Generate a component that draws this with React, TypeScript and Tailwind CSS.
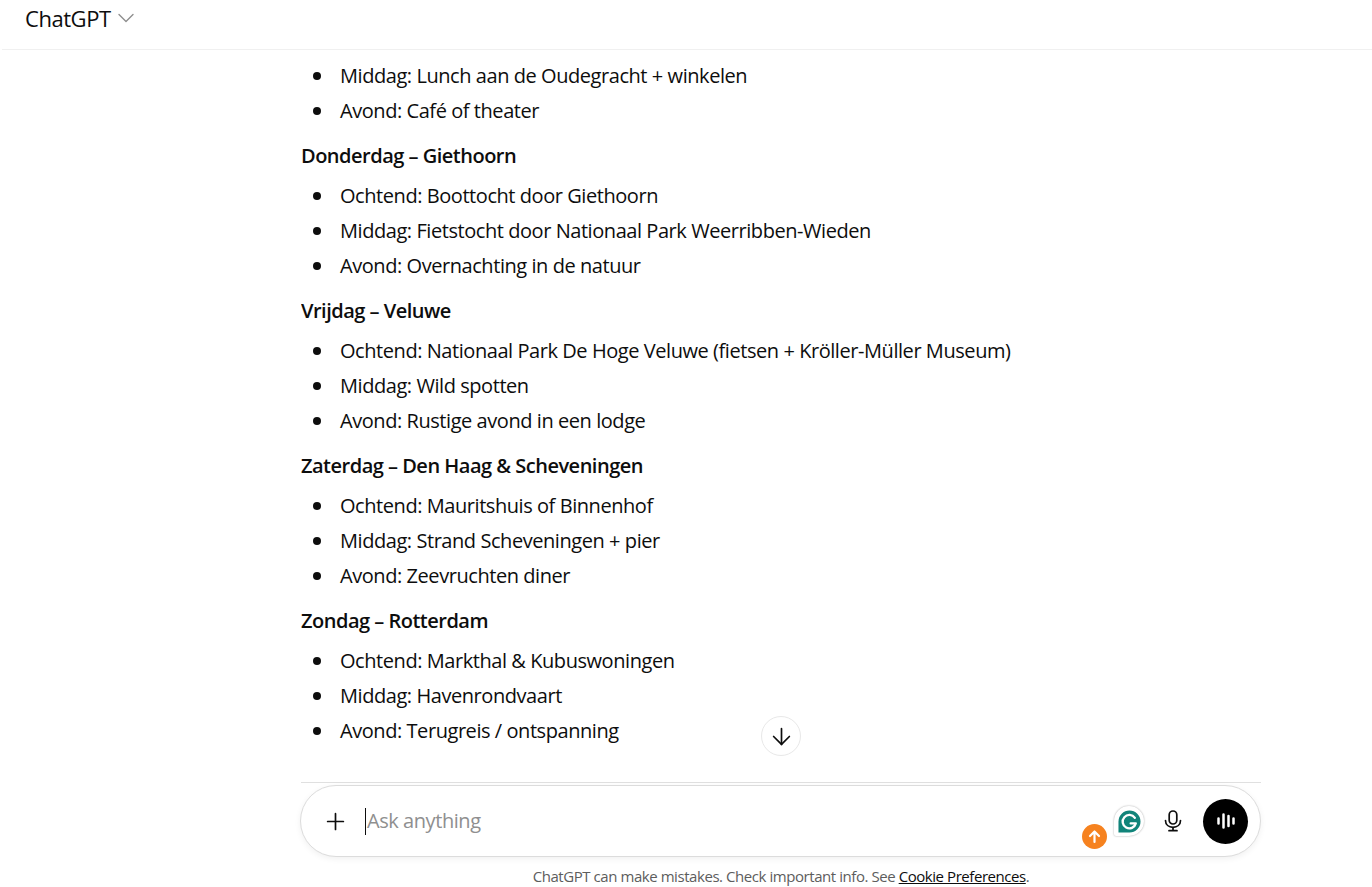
import { ArrowDown, ChevronDown, Plus } from "lucide-react";

const sections = [
  {
    items: ["Middag: Lunch aan de Oudegracht + winkelen", "Avond: Café of theater"],
  },
  {
    title: "Donderdag – Giethoorn",
    items: [
      "Ochtend: Boottocht door Giethoorn",
      "Middag: Fietstocht door Nationaal Park Weerribben-Wieden",
      "Avond: Overnachting in de natuur",
    ],
  },
  {
    title: "Vrijdag – Veluwe",
    items: [
      "Ochtend: Nationaal Park De Hoge Veluwe (fietsen + Kröller-Müller Museum)",
      "Middag: Wild spotten",
      "Avond: Rustige avond in een lodge",
    ],
  },
  {
    title: "Zaterdag – Den Haag & Scheveningen",
    items: [
      "Ochtend: Mauritshuis of Binnenhof",
      "Middag: Strand Scheveningen + pier",
      "Avond: Zeevruchten diner",
    ],
  },
  {
    title: "Zondag – Rotterdam",
    items: ["Ochtend: Markthal & Kubuswoningen", "Middag: Havenrondvaart", "Avond: Terugreis / ontspanning"],
  },
];

function MicIcon() {
  return (
    <svg width="20" height="24" viewBox="0 0 20 24" fill="none" stroke="#0d0d0d" strokeWidth="1.7" strokeLinecap="round">
      <rect x="6.2" y="2" width="7.6" height="13" rx="3.8" />
      <path d="M2.5 11.5c0 4.2 3.3 6.8 7.5 6.8s7.5-2.6 7.5-6.8" />
      <path d="M10 18.5V21.5M6 21.7h8" />
    </svg>
  );
}

function VoiceIcon() {
  return (
    <svg width="20" height="20" viewBox="0 0 20 20" fill="none" stroke="#fff" strokeWidth="2.5" strokeLinecap="round">
      <path d="M2.5 7.5v5M7.5 3.5v13M12.5 5v10M17.5 7.5v5" />
    </svg>
  );
}

function GrammarlyBadge() {
  return (
    <div className="absolute left-[813px] top-[20px] flex h-[30px] w-[30px] items-center justify-center rounded-[15px] rounded-bl-[2px] bg-white shadow-[0_0_2px_rgba(0,0,0,0.35)]">
      <svg width="23" height="23" viewBox="0 0 24 24">
        <path d="M12 .5a11.5 11.5 0 1 1 0 23H.5V12A11.5 11.5 0 0 1 12 .5z" fill="#11847a" />
        <path
          d="M17.6 8.2A7 7 0 1 0 18.6 14h-5.4"
          fill="none"
          stroke="#fff"
          strokeWidth="2.4"
          strokeLinecap="round"
          strokeLinejoin="round"
        />
      </svg>
    </div>
  );
}

function OrangeBadge() {
  return (
    <div className="absolute left-[781px] top-[38px] flex h-[25px] w-[25px] items-center justify-center rounded-full bg-[#f6821f]">
      <svg width="15" height="15" viewBox="0 0 15 15" fill="none" stroke="#fff" strokeWidth="2.2" strokeLinecap="round" strokeLinejoin="round">
        <path d="M7.5 13V2.5M3 7l4.5-4.5L12 7" />
      </svg>
    </div>
  );
}

export default function App() {
  return (
    <div className="flex h-[887px] w-[1372px] flex-col overflow-hidden bg-white font-['Open_Sans','Noto_Sans',sans-serif] text-[20px] leading-[35px] tracking-[-0.44px] text-[#0d0d0d]">
      <header className="ml-[2px] flex h-[50px] shrink-0 items-start border-b border-[#f0f0f0] pl-[23px] pt-[1px]">
        <span className="text-[22px] leading-[34px] tracking-[-0.45px]">ChatGPT</span>
        <ChevronDown className="ml-[1px] mt-[3px] h-[28px] w-[28px] text-[#8f8f8f]" strokeWidth={1.2} />
      </header>

      <main className="relative ml-[301px] h-[732px] w-[960px] shrink-0 overflow-hidden pt-[8px]">
        {sections.map((section, index) => (
          <section key={index}>
            {section.title && <h3 className="mb-[5px] mt-[10px] font-semibold tracking-[-0.5px]">{section.title}</h3>}
            <ul>
              {section.items.map((item) => (
                <li key={item} className="flex items-center">
                  <span className="ml-[12px] mr-[19px] h-[8px] w-[8px] shrink-0 rounded-full bg-[#0d0d0d]" />
                  {item}
                </li>
              ))}
            </ul>
          </section>
        ))}
        <button className="absolute left-[460px] top-[666px] flex h-[40px] w-[40px] items-center justify-center rounded-full border border-[#e8e8e8] bg-white">
          <ArrowDown className="h-[27px] w-[27px]" strokeWidth={1.5} />
        </button>
      </main>

      <div className="ml-[301px] w-[960px] shrink-0 border-t border-[#e0e0e0] pt-[2px]">
        <div className="relative ml-[-1px] flex h-[72px] w-[961px] items-center rounded-[36px] border border-[#dcdcdc] bg-white pl-[21px] pr-[12px] shadow-[0_2px_6px_rgba(0,0,0,0.06)]">
          <Plus className="h-[27px] w-[27px]" strokeWidth={1.5} />
          <div className="ml-[16px] h-[27px] w-px bg-[#0d0d0d]" />
          <span className="ml-px pb-[2px] text-[#8f8f8f]">Ask anything</span>
          <GrammarlyBadge />
          <OrangeBadge />
          <div className="ml-auto flex items-center gap-[20px]">
            <MicIcon />
            <div className="flex h-[45px] w-[45px] items-center justify-center rounded-full bg-black">
              <VoiceIcon />
            </div>
          </div>
        </div>
        <p className="mt-[9px] text-center text-[15px] leading-[20px] text-[#5d5d5d]">
          ChatGPT can make mistakes. Check important info. See{" "}
          <span className="text-[#0d0d0d] underline">Cookie Preferences</span>.
        </p>
      </div>
    </div>
  );
}
